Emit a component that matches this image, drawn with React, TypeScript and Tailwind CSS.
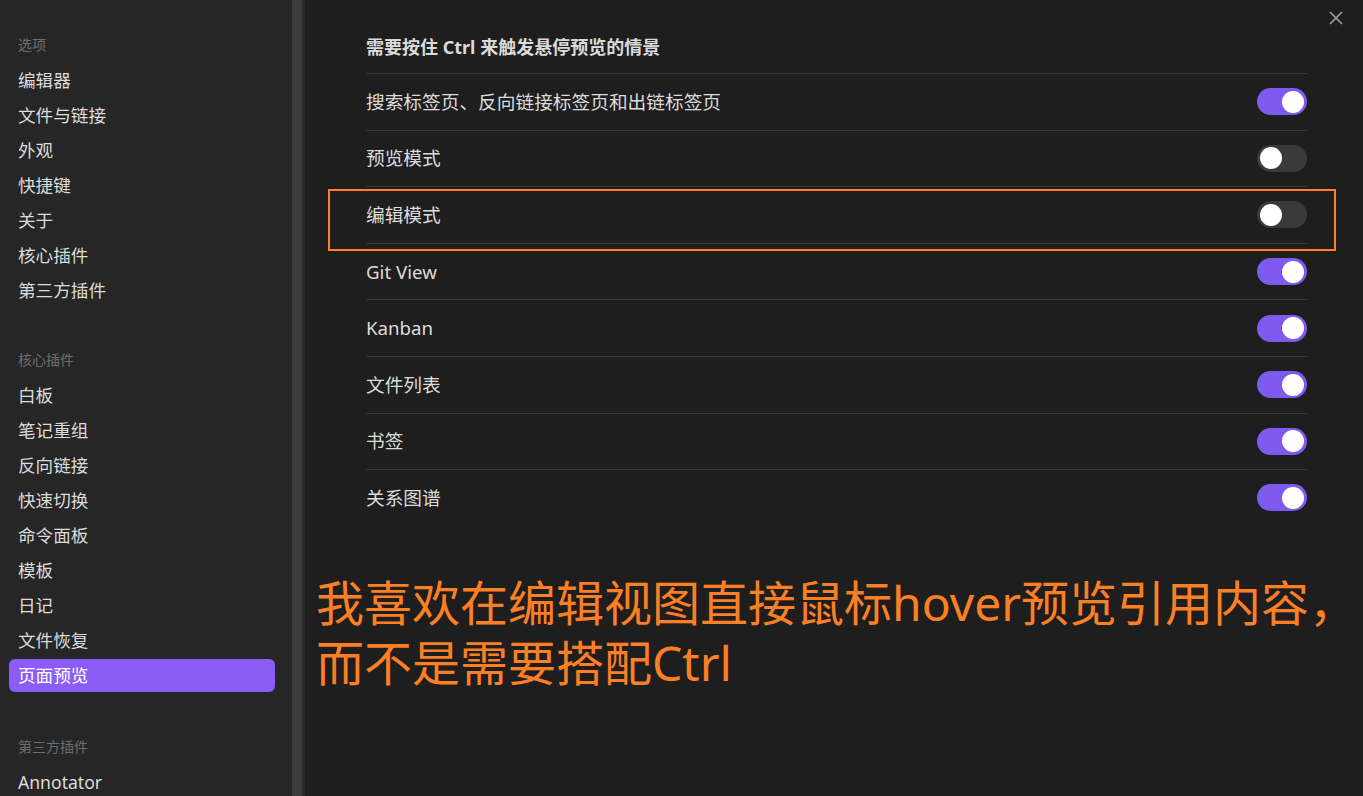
const font = {
  fontFamily: '"Noto Sans", "Noto Sans CJK SC", sans-serif',
};

type NavSection = { title: string; items: string[]; gap: string };

const sections: NavSection[] = [
  {
    title: "选项",
    gap: "",
    items: ["编辑器", "文件与链接", "外观", "快捷键", "关于", "核心插件", "第三方插件"],
  },
  {
    title: "核心插件",
    gap: "mt-[33px]",
    items: ["白板", "笔记重组", "反向链接", "快速切换", "命令面板", "模板", "日记", "文件恢复", "页面预览"],
  },
  {
    title: "第三方插件",
    gap: "mt-[35px]",
    items: ["Annotator"],
  },
];

const rows = [
  { label: "搜索标签页、反向链接标签页和出链标签页", on: true },
  { label: "预览模式", on: false },
  { label: "编辑模式", on: false, marked: true },
  { label: "Git View", on: true },
  { label: "Kanban", on: true },
  { label: "文件列表", on: true },
  { label: "书签", on: true },
  { label: "关系图谱", on: true },
];

const Toggle = ({ on }: { on: boolean }) => (
  <div
    className={`w-[50px] h-[27px] rounded-full flex items-center px-[3px] ${
      on ? "bg-[#7f5af0] justify-end" : "bg-[#3a3a3a] justify-start"
    }`}
  >
    <div className="w-[22px] h-[22px] rounded-full bg-white" />
  </div>
);

const Sidebar = () => (
  <div className="w-[292px] h-full bg-[#262626] pt-[26px] overflow-hidden shrink-0">
    {sections.map((section) => (
      <div key={section.title} className={section.gap}>
        <div className="h-[37px] flex items-center pl-[18px] text-[14px] text-[#6e6e6e]">
          {section.title}
        </div>
        {section.items.map((item) => {
          const active = item === "页面预览";
          return (
            <div key={item} className="h-[35px] py-px pl-[9px] pr-[17px]">
              <div
                className={`h-full pl-[9px] flex items-center rounded-md text-[17.6px] ${
                  active ? "bg-[#8b5cf6] text-white" : "text-[#dcdcdc]"
                }`}
              >
                {item}
              </div>
            </div>
          );
        })}
      </div>
    ))}
  </div>
);

export default function App() {
  return (
    <div style={font} className="w-[1363px] h-[796px] flex bg-[#1e1e1e] overflow-hidden">
      <Sidebar />
      <div className="w-[10px] h-full bg-[#3c3c3c] shrink-0" />
      <div className="w-[3px] h-full bg-[#2a2a2a] shrink-0" />

      <div className="relative flex-1 h-full">
        <button className="absolute right-[20px] top-[11px] text-[#a0a0a0]">
          <svg width="14" height="14" viewBox="0 0 14 14" fill="none" stroke="currentColor" strokeWidth="1.6">
            <path d="M1 1 L13 13 M13 1 L1 13" />
          </svg>
        </button>

        <div className="pl-[61px] pr-[56px] pt-[35px]">
          <div className="h-[24px] leading-[24px] text-[18px] font-bold text-[#dadada] mb-[14px]">
            需要按住 Ctrl 来触发悬停预览的情景
          </div>
          {rows.map((row) => (
            <div
              key={row.label}
              className="relative h-[56.6px] border-t border-[#363636] flex items-center justify-between"
            >
              <span className="text-[18.7px] text-[#dcdcdc]">{row.label}</span>
              <Toggle on={row.on} />
              {row.marked && (
                <div className="absolute left-[-38px] right-[-29px] top-[2px] bottom-[-8px] border-2 border-[#ff7f27] pointer-events-none" />
              )}
            </div>
          ))}
        </div>

        <div className="pl-[11px] mt-[47px] text-[48px] leading-[60px] text-[#fb7f24] whitespace-nowrap">
          <div>我喜欢在编辑视图直接鼠标hover预览引用内容，</div>
          <div>而不是需要搭配Ctrl</div>
        </div>
      </div>
    </div>
  );
}
